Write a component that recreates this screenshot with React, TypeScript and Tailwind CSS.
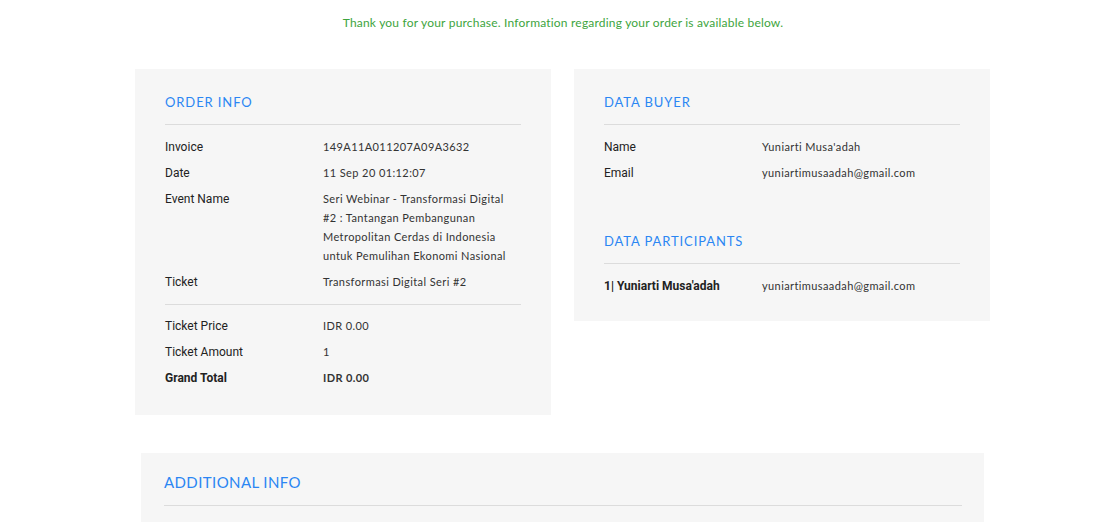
const labelFont = "font-['Roboto',sans-serif]";
const valueFont = "font-['Lato',sans-serif]";

function Row({ label, children, bold }: { label: string; children: React.ReactNode; bold?: boolean }) {
	return (
		<div className="flex leading-[19px]">
			<div className={`w-[158px] h-[19px] shrink-0 leading-[21px] text-[12px] text-[#222] ${labelFont} ${bold ? 'font-bold' : ''}`}>{label}</div>
			<div className={`text-[11px] text-[#333] tracking-[0.4px] ${valueFont} ${bold ? 'font-bold' : ''}`}>{children}</div>
		</div>
	);
}

function Heading({ children }: { children: React.ReactNode }) {
	return (
		<>
			<h3 className={`text-[13px] leading-[18px] tracking-[0.9px] text-[#2b86f3] ${valueFont}`}>{children}</h3>
			<hr className="mt-[13px] mb-[12px] border-0 h-px bg-[#dcdcdc]" />
		</>
	);
}

export default function App() {
	return (
		<div className="min-h-[522px] bg-white overflow-hidden">
			<p className={`pt-[15px] pl-[13px] text-center text-[12px] leading-[16px] text-[#3da43d] tracking-[0.2px] ${valueFont}`}>
				Thank you for your purchase. Information regarding your order is available below.
			</p>

			<div className="mt-[38px] flex gap-[23px] pl-[135px]">
				<section className="w-[416px] bg-[#f6f6f6] px-[30px] pt-6 pb-[28px]">
					<Heading>ORDER INFO</Heading>
					<div className="flex flex-col gap-[7px]">
						<Row label="Invoice">149A11A011207A09A3632</Row>
						<Row label="Date">11 Sep 20 01:12:07</Row>
						<Row label="Event Name">
							Seri Webinar - Transformasi Digital
							<br />
							#2 : Tantangan Pembangunan
							<br />
							Metropolitan Cerdas di Indonesia
							<br />
							untuk Pemulihan Ekonomi Nasional
						</Row>
						<Row label="Ticket">Transformasi Digital Seri #2</Row>
					</div>
					<hr className="mt-[13px] mb-[11px] border-0 h-px bg-[#dcdcdc]" />
					<div className="flex flex-col gap-[7px]">
						<Row label="Ticket Price">IDR 0.00</Row>
						<Row label="Ticket Amount">1</Row>
						<Row label="Grand Total" bold>
							IDR 0.00
						</Row>
					</div>
				</section>

				<section className="w-[416px] self-start bg-[#f6f6f6] px-[30px] pt-6 pb-[26px]">
					<Heading>DATA BUYER</Heading>
					<div className="flex flex-col gap-[7px]">
						<Row label="Name">Yuniarti Musa'adah</Row>
						<Row label="Email">yuniartimusaadah@gmail.com</Row>
					</div>
					<div className="mt-[50px]">
						<Heading>DATA PARTICIPANTS</Heading>
					</div>
					<Row label="1| Yuniarti Musa'adah" bold>
						<span className="font-normal">yuniartimusaadah@gmail.com</span>
					</Row>
				</section>
			</div>

			<section className="mt-[38px] ml-[141px] w-[843px] bg-[#f6f6f6] pl-[23px] pr-[22px] pt-[20px] pb-6">
				<h3 className={`text-[15px] leading-[18px] tracking-[0.4px] text-[#2b86f3] ${valueFont}`}>ADDITIONAL INFO</h3>
				<hr className="mt-[14px] border-0 h-px bg-[#dcdcdc]" />
			</section>
		</div>
	);
}
